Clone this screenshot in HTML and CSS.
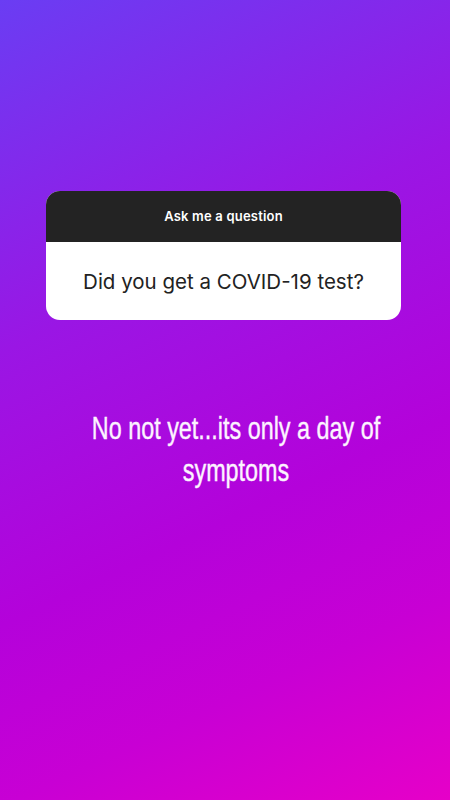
FILE: index.html
```html
<!DOCTYPE html>
<html lang="en">
<head>
  <meta charset="UTF-8">
  <title>Ask me a question</title>
  <link rel="stylesheet" href="styles.css">
</head>
<body>
  <div class="story">
    <div class="question-card">
      <div class="card-head">Ask me a question</div>
      <div class="card-body">Did you get a COVID-19 test?</div>
    </div>
    <p class="answer">No not yet...its only a day of symptoms</p>
  </div>
</body>
</html>
```

FILE: styles.css
```css
body {
  margin: 0;
  font-family: "Inter", "Liberation Sans", sans-serif;
}

.story {
  width: 450px;
  height: 800px;
  background: linear-gradient(155deg, #6a3df3 0%, #9a16e4 35%, #b402da 62%, #c800d4 80%, #e600c8 100%);
  display: flex;
  flex-direction: column;
  align-items: center;
  padding-top: 191px;
  box-sizing: border-box;
}

.question-card {
  width: 355px;
  margin-right: 3px;
  border-radius: 14px;
  overflow: hidden;
  background-color: #fff;
}

.card-head {
  background-color: #232323;
  color: #fff;
  font-size: 13px;
  font-weight: 600;
  letter-spacing: 0.2px;
  height: 51px;
  line-height: 51px;
  text-align: center;
}

.card-body {
  color: #222;
  font-size: 20.5px;
  height: 78px;
  line-height: 80px;
  text-align: center;
}

.answer {
  margin: 87px 0 0 22px;
  width: 400px;
  color: #fdf3ff;
  font-family: "Liberation Sans", sans-serif;
  font-size: 32px;
  line-height: 42px;
  text-align: center;
  -webkit-text-stroke: 0.4px #fdf3ff;
  transform: scaleX(0.73);
}
```
